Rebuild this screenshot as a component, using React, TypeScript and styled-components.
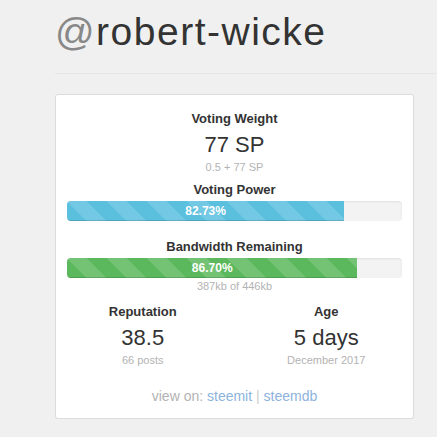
import React from 'react';
import styled, { createGlobalStyle } from 'styled-components';

const GlobalStyle = createGlobalStyle`
  html, body {
    margin: 0;
    padding: 0;
    background: #f0f0f0;
    font-family: "Liberation Sans", Arial, sans-serif;
    color: #333;
  }
`;

const Page = styled.div`
  padding: 11px 0 0 55px;
  overflow: hidden;
`;

const Title = styled.h1`
  margin: 0;
  font-size: 39px;
  line-height: 42px;
  font-weight: 400;
  letter-spacing: 1.5px;
  color: #333;
`;

const At = styled.span`
  color: #888;
`;

const Rule = styled.hr`
  margin: 20px 0 20px 0;
  border: 0;
  border-top: 1px solid #e6e6e6;
  width: 500px;
`;

const Card = styled.div`
  box-sizing: border-box;
  width: 359px;
  height: 325px;
  background: #fff;
  border: 1px solid #dcdcdc;
  border-radius: 3px;
  box-shadow: 0 1px 1px rgba(0, 0, 0, 0.04);
  padding: 15px 11px 0 11px;
  text-align: center;
`;

const Label = styled.div`
  font-size: 13px;
  font-weight: 700;
  line-height: 18px;
  color: #333;
`;

const Value = styled.div`
  margin-top: 3px;
  font-size: 22px;
  font-weight: 300;
  line-height: 28px;
  color: #333;
`;

const Sub = styled.div`
  font-size: 11px;
  line-height: 16px;
  color: #b3b3b3;
`;

const Track = styled.div`
  height: 20px;
  background: #f3f3f3;
  border-radius: 4px;
  box-shadow: inset 0 1px 2px rgba(0, 0, 0, 0.08);
  overflow: hidden;
  margin-top: 2px;
`;

const Fill = styled.div<{ $color: string }>`
  height: 100%;
  background-color: ${(p) => p.$color};
  background-image: linear-gradient(
    45deg,
    rgba(255, 255, 255, 0.15) 25%,
    transparent 25%,
    transparent 50%,
    rgba(255, 255, 255, 0.15) 50%,
    rgba(255, 255, 255, 0.15) 75%,
    transparent 75%,
    transparent
  );
  background-size: 40px 40px;
  box-shadow: inset 0 -1px 0 rgba(0, 0, 0, 0.15);
  color: #fff;
  font-size: 12px;
  font-weight: 700;
  line-height: 20px;
  text-align: center;
`;

const Section = styled.div<{ $gap?: number }>`
  margin-top: ${(p) => p.$gap ?? 0}px;
`;

const Stats = styled.div`
  display: grid;
  grid-template-columns: 1fr 1fr;
  margin: 9px -16px 0 -16px;
`;

const Footer = styled.div`
  margin-top: 20px;
  font-size: 14px;
  color: #b3b3b3;
`;

const Link = styled.a`
  color: #8db3dc;
  text-decoration: none;
`;

const Pipe = styled.span`
  color: #ccc;
`;

export default function App() {
  const votingPower = 82.73;
  const bandwidth = 86.7;
  return (
    <>
      <GlobalStyle />
      <Page>
        <Title>
          <At>@</At>robert-wicke
        </Title>
        <Rule />
        <Card>
          <Section>
            <Label>Voting Weight</Label>
            <Value>77 SP</Value>
            <Sub>0.5 + 77 SP</Sub>
          </Section>
          <Section $gap={6}>
            <Label>Voting Power</Label>
            <Track>
              <Fill $color="#5bc0de" style={{ width: `${votingPower}%` }}>
                {votingPower.toFixed(2)}%
              </Fill>
            </Track>
          </Section>
          <Section $gap={17}>
            <Label>Bandwidth Remaining</Label>
            <Track>
              <Fill $color="#5cb85c" style={{ width: `${bandwidth}%` }}>
                {bandwidth.toFixed(2)}%
              </Fill>
            </Track>
            <Sub>387kb of 446kb</Sub>
          </Section>
          <Stats>
            <div>
              <Label>Reputation</Label>
              <Value>38.5</Value>
              <Sub>66 posts</Sub>
            </div>
            <div>
              <Label>Age</Label>
              <Value>5 days</Value>
              <Sub>December 2017</Sub>
            </div>
          </Stats>
          <Footer>
            view on: <Link href="#">steemit</Link> <Pipe>|</Pipe>{' '}
            <Link href="#">steemdb</Link>
          </Footer>
        </Card>
      </Page>
    </>
  );
}
